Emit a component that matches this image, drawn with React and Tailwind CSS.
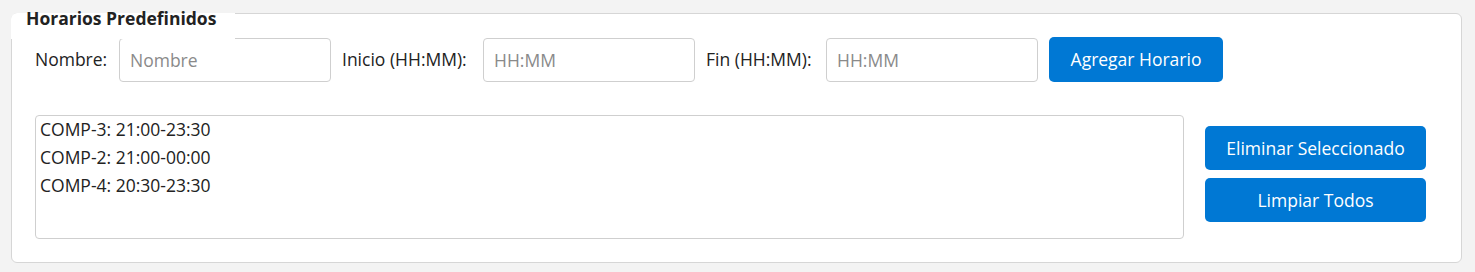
import React, { useState } from "react";

const font = { fontFamily: '"Open Sans", "Noto Sans", sans-serif' };

function Field({ label, placeholder, labelClass }) {
  return (
    <>
      <label className={`shrink-0 whitespace-nowrap text-[17.5px] text-[#222] ${labelClass}`}>{label}</label>
      <input
        type="text"
        placeholder={placeholder}
        className="h-[44px] w-[212px] shrink-0 rounded-[4px] border border-[#cfcfcf] bg-white px-[10px] text-[17.5px] text-[#222] placeholder:text-[#8a8a8a] outline-none"
      />
    </>
  );
}

export default function App() {
  const [items] = useState([
    "COMP-3: 21:00-23:30",
    "COMP-2: 21:00-00:00",
    "COMP-4: 20:30-23:30",
  ]);

  return (
    <div className="h-[272px] w-[1475px] bg-[#f3f3f3] pt-[13px] pl-[11px]" style={font}>
      <div className="relative h-[250px] w-[1451px] rounded-[6px] border border-[#d6d6d6] bg-white">
        <div className="absolute -left-px -top-px h-[26px] w-[224px] rounded-tl-[6px] bg-white">
          <span className="-mt-[7px] block whitespace-nowrap pl-[15px] text-[17.5px] font-bold leading-[24px] text-[#222]">
            Horarios Predefinidos
          </span>
        </div>

        <div className="flex items-center gap-[11px] pl-[23px] pt-[23px]">
          <div className="flex items-center">
            <Field label="Nombre:" placeholder="Nombre" labelClass="w-[84px]" />
          </div>
          <div className="flex items-center">
            <Field label="Inicio (HH:MM):" placeholder="HH:MM" labelClass="w-[141px]" />
          </div>
          <div className="flex items-center">
            <Field label="Fin (HH:MM):" placeholder="HH:MM" labelClass="w-[120px]" />
          </div>
          <button className="h-[45px] w-[174px] shrink-0 rounded-[5px] bg-[#0078d4] text-[17.5px] text-white">
            Agregar Horario
          </button>
        </div>

        <div className="mt-[34px] flex pl-[23px]">
          <div className="-mt-px h-[124px] w-[1149px] rounded-[4px] border border-[#cfcfcf] bg-white px-[4px]">
            {items.map((it) => (
              <div key={it} className="-mt-px mb-px h-[28px] text-[17.5px] leading-[28px] text-[#222]">
                {it}
              </div>
            ))}
          </div>
          <div className="ml-[21px] mt-[10px] flex flex-col gap-[8px]">
            <button className="h-[44px] w-[221px] rounded-[5px] bg-[#0078d4] text-[17.5px] text-white">
              Eliminar Seleccionado
            </button>
            <button className="h-[44px] w-[221px] rounded-[5px] bg-[#0078d4] text-[17.5px] text-white">
              Limpiar Todos
            </button>
          </div>
        </div>
      </div>
    </div>
  );
}
